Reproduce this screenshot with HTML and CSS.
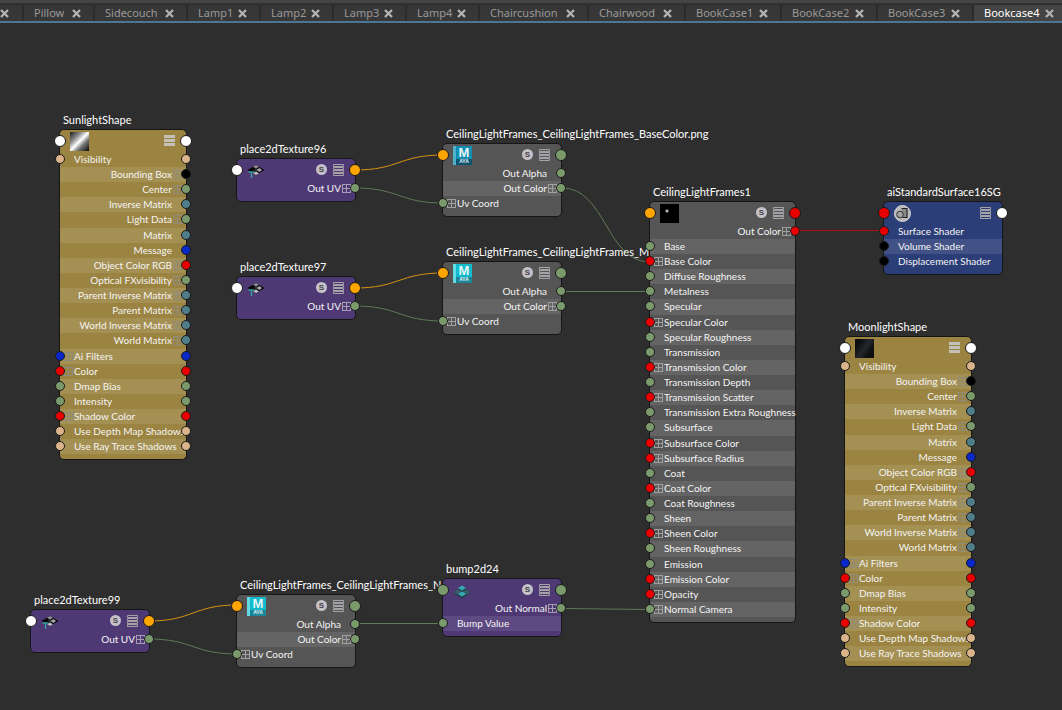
FILE: index.html
```html
<!DOCTYPE html>
<html lang="en">
<head>
<meta charset="utf-8">
<title>Node Editor</title>
<link rel="stylesheet" href="styles.css">
</head>
<body>
<svg class="defs" aria-hidden="true">
  <defs>
    <symbol id="close" viewBox="0 0 9 9"><path d="M1 1 8 8M8 1 1 8" stroke="currentColor" stroke-width="2.3" fill="none"/></symbol>
    <symbol id="bars" viewBox="0 0 11 12"><path d="M.5 .5h10v2H.5zM.5 3.5h10v2H.5zM.5 6.5h10v2H.5zM.5 9.5h10v2H.5z" fill="none" stroke="#a5a2a8"/></symbol>
    <symbol id="bars-solid" viewBox="0 0 11 12"><path d="M0 0h11v3H0zM0 4h11v3H0zM0 8h11v3H0z" fill="#c4c1b8"/></symbol>
    <symbol id="place" viewBox="0 0 17 14">
      <path d="M0 5 8.500 0 17 5 8.500 10z" fill="#060606"/>
      <path d="M5.500 1.800 8.500 0l3 1.800-3 2z" fill="#8d8a92"/>
      <path d="M8.500 3.300 11 5 8.500 6.700 6 5z" fill="#2d2d31"/>
      <path d="M9 5 12 3l2.500 2L12 7z" fill="#a6a3aa"/>
      <path d="M5.500 8.200 8.500 6.500l3 1.800L8.500 10z" fill="#c2c1c4"/>
      <path d="M1 7h6M4 7v6" stroke="#35a3a5" stroke-width="1.300" fill="none"/>
    </symbol>
    <symbol id="bump" viewBox="0 0 18 13">
      <path d="M0 7 9 1l9 6-9 6z" fill="#26404a"/>
      <path d="M9 0l4 2.500L9 5 5 2.500z" fill="#39a9b8"/>
      <path d="M4.500 4 8.500 6.500 4.500 9 .8 6.700z" fill="#35606b"/>
      <path d="M13.500 4 17.200 6.700 13.500 9 9.500 6.500z" fill="#35606b"/>
      <path d="M9 6l4 2.500L9 11 5 8.500z" fill="#39a9b8"/>
    </symbol>
    <symbol id="group" viewBox="0 0 17 17">
      <circle cx="8.500" cy="8.500" r="8" fill="#b9b9b9" stroke="#d2d2d2"/>
      <path d="M7.500 3.500h5.500v9H8.500" fill="#8a8a8a" stroke="#222" stroke-width="1.100"/>
      <circle cx="6" cy="9.500" r="3.300" fill="#a4a4a4" stroke="#333"/>
    </symbol>
  </defs>
</svg>

<nav class="tabs" aria-label="Graph tabs">
  <div class="tab tab-cut"><button class="close" aria-label="Close tab"><svg><use href="#close"/></svg></button></div>
  <div class="tab tab-pillow"><button class="label">Pillow</button><button class="close" aria-label="Close Pillow"><svg><use href="#close"/></svg></button></div>
  <div class="tab tab-couch"><button class="label">Sidecouch</button><button class="close" aria-label="Close Sidecouch"><svg><use href="#close"/></svg></button></div>
  <div class="tab tab-lamp"><button class="label">Lamp1</button><button class="close" aria-label="Close Lamp1"><svg><use href="#close"/></svg></button></div>
  <div class="tab tab-lamp"><button class="label">Lamp2</button><button class="close" aria-label="Close Lamp2"><svg><use href="#close"/></svg></button></div>
  <div class="tab tab-lamp"><button class="label">Lamp3</button><button class="close" aria-label="Close Lamp3"><svg><use href="#close"/></svg></button></div>
  <div class="tab tab-lamp"><button class="label">Lamp4</button><button class="close" aria-label="Close Lamp4"><svg><use href="#close"/></svg></button></div>
  <div class="tab tab-cushion"><button class="label">Chaircushion</button><button class="close" aria-label="Close Chaircushion"><svg><use href="#close"/></svg></button></div>
  <div class="tab tab-wood"><button class="label">Chairwood</button><button class="close" aria-label="Close Chairwood"><svg><use href="#close"/></svg></button></div>
  <div class="tab tab-book"><button class="label">BookCase1</button><button class="close" aria-label="Close BookCase1"><svg><use href="#close"/></svg></button></div>
  <div class="tab tab-book"><button class="label">BookCase2</button><button class="close" aria-label="Close BookCase2"><svg><use href="#close"/></svg></button></div>
  <div class="tab tab-book"><button class="label">BookCase3</button><button class="close" aria-label="Close BookCase3"><svg><use href="#close"/></svg></button></div>
  <div class="tab tab-book active"><button class="label">Bookcase4</button><button class="close" aria-label="Close Bookcase4"><svg><use href="#close"/></svg></button></div>
</nav>

<main class="canvas">
  <svg class="wires" aria-hidden="true">
    <g class="wire-orange">
      <path d="M355 147C399 147 399 132 443 132"/>
      <path d="M355 265C399 265 399 250 443 250"/>
      <path d="M149 598C193 598 193 582 237 582"/>
    </g>
    <g class="wire-green">
      <path d="M355 165C399 165 399 180 443 180"/>
      <path d="M355 283C399 283 399 298 443 298"/>
      <path d="M149 616C193 616 193 631 237 631"/>
      <path d="M562 165C606 165 606 239 650 239"/>
      <path d="M562 268.500H650"/>
      <path d="M355 600.500H443"/>
      <path d="M562 585.500 650 586.500"/>
    </g>
    <path class="wire-red" d="M796 207.500H884"/>
  </svg>

  <section class="node gold" id="sunlight">
    <h2>SunlightShape</h2>
    <div class="body">
      <header><i class="port l white"></i><span class="swatch metal"></span><button class="menu" aria-label="Display mode"><svg><use href="#bars-solid"/></svg></button><i class="port r white"></i></header>
      <ul>
        <li class="in"><i class="port l tan"></i>Visibility<i class="port r tan"></i></li>
        <li class="out plus">Bounding Box<i class="port r black"></i></li>
        <li class="out plus">Center<i class="port r green"></i></li>
        <li class="out">Inverse Matrix<i class="port r teal"></i></li>
        <li class="out plus tall">Light Data<i class="port r green"></i></li>
        <li class="out">Matrix<i class="port r teal"></i></li>
        <li class="out">Message<i class="port r blue"></i></li>
        <li class="out plus">Object Color RGB<i class="port r red"></i></li>
        <li class="out plus">Optical FXvisibility<i class="port r green"></i></li>
        <li class="out plus">Parent Inverse Matrix<i class="port r teal"></i></li>
        <li class="out plus">Parent Matrix<i class="port r teal"></i></li>
        <li class="out plus">World Inverse Matrix<i class="port r teal"></i></li>
        <li class="out plus tall">World Matrix<i class="port r teal"></i></li>
        <li class="in plus"><i class="port l blue"></i>Ai Filters<i class="port r blue"></i></li>
        <li class="in plus"><i class="port l red"></i>Color<i class="port r red"></i></li>
        <li class="in"><i class="port l green"></i>Dmap Bias<i class="port r green"></i></li>
        <li class="in"><i class="port l green"></i>Intensity<i class="port r green"></i></li>
        <li class="in plus"><i class="port l red"></i>Shadow Color<i class="port r red"></i></li>
        <li class="in"><i class="port l tan"></i>Use Depth Map Shadows<i class="port r tan"></i></li>
        <li class="in"><i class="port l tan"></i>Use Ray Trace Shadows<i class="port r tan"></i></li>
      </ul>
    </div>
  </section>

  <section class="node purple" id="place96">
    <h2>place2dTexture96</h2>
    <div class="body">
      <header><i class="port l white"></i><svg class="glyph"><use href="#place"/></svg><button class="solo" aria-label="Solo">S</button><button class="menu" aria-label="Display mode"><svg><use href="#bars"/></svg></button><i class="port r orange"></i></header>
      <ul><li class="out plus">Out UV<i class="port r green"></i></li></ul>
    </div>
  </section>

  <section class="node purple" id="place97">
    <h2>place2dTexture97</h2>
    <div class="body">
      <header><i class="port l white"></i><svg class="glyph"><use href="#place"/></svg><button class="solo" aria-label="Solo">S</button><button class="menu" aria-label="Display mode"><svg><use href="#bars"/></svg></button><i class="port r orange"></i></header>
      <ul><li class="out plus">Out UV<i class="port r green"></i></li></ul>
    </div>
  </section>

  <section class="node purple" id="place99">
    <h2>place2dTexture99</h2>
    <div class="body">
      <header><i class="port l white"></i><svg class="glyph"><use href="#place"/></svg><button class="solo" aria-label="Solo">S</button><button class="menu" aria-label="Display mode"><svg><use href="#bars"/></svg></button><i class="port r orange"></i></header>
      <ul><li class="out plus">Out UV<i class="port r green"></i></li></ul>
    </div>
  </section>

  <section class="node gray" id="file-base">
    <h2>CeilingLightFrames_CeilingLightFrames_BaseColor.png</h2>
    <div class="body">
      <header><i class="port l orange"></i><span class="swatch maya dim"><b>M</b><small>AYA</small></span><button class="solo" aria-label="Solo">S</button><button class="menu" aria-label="Display mode"><svg><use href="#bars"/></svg></button><i class="port r green"></i></header>
      <ul>
        <li class="out">Out Alpha<i class="port r green"></i></li>
        <li class="out plus">Out Color<i class="port r green"></i></li>
        <li class="in plus"><i class="port l green"></i>Uv Coord</li>
      </ul>
    </div>
  </section>

  <section class="node gray" id="file-metal">
    <h2>CeilingLightFrames_CeilingLightFrames_Met</h2>
    <div class="body">
      <header><i class="port l orange"></i><span class="swatch maya"><b>M</b><small>AYA</small></span><button class="solo" aria-label="Solo">S</button><button class="menu" aria-label="Display mode"><svg><use href="#bars"/></svg></button><i class="port r green"></i></header>
      <ul>
        <li class="out">Out Alpha<i class="port r green"></i></li>
        <li class="out plus">Out Color<i class="port r green"></i></li>
        <li class="in plus"><i class="port l green"></i>Uv Coord</li>
      </ul>
    </div>
  </section>

  <section class="node gray" id="file-normal">
    <h2>CeilingLightFrames_CeilingLightFrames_Nor</h2>
    <div class="body">
      <header><i class="port l orange"></i><span class="swatch maya"><b>M</b><small>AYA</small></span><button class="solo" aria-label="Solo">S</button><button class="menu" aria-label="Display mode"><svg><use href="#bars"/></svg></button><i class="port r green"></i></header>
      <ul>
        <li class="out">Out Alpha<i class="port r green"></i></li>
        <li class="out plus">Out Color<i class="port r green"></i></li>
        <li class="in plus"><i class="port l green"></i>Uv Coord</li>
      </ul>
    </div>
  </section>

  <section class="node purple" id="bump24">
    <h2>bump2d24</h2>
    <div class="body">
      <header><i class="port l green"></i><svg class="glyph"><use href="#bump"/></svg><button class="solo" aria-label="Solo">S</button><button class="menu" aria-label="Display mode"><svg><use href="#bars"/></svg></button><i class="port r green"></i></header>
      <ul>
        <li class="out plus">Out Normal<i class="port r green"></i></li>
        <li class="in"><i class="port l green"></i>Bump Value</li>
      </ul>
    </div>
  </section>

  <section class="node gray" id="surface">
    <h2>CeilingLightFrames1</h2>
    <div class="body">
      <header><i class="port l orange"></i><span class="swatch night"></span><button class="solo" aria-label="Solo">S</button><button class="menu" aria-label="Display mode"><svg><use href="#bars"/></svg></button><i class="port r red"></i></header>
      <ul>
        <li class="out plus">Out Color<i class="port r red"></i></li>
        <li class="in"><i class="port l green"></i>Base</li>
        <li class="in plus"><i class="port l red"></i>Base Color</li>
        <li class="in"><i class="port l green"></i>Diffuse Roughness</li>
        <li class="in"><i class="port l green"></i>Metalness</li>
        <li class="in tall"><i class="port l green"></i>Specular</li>
        <li class="in plus"><i class="port l red"></i>Specular Color</li>
        <li class="in"><i class="port l green"></i>Specular Roughness</li>
        <li class="in"><i class="port l green"></i>Transmission</li>
        <li class="in plus"><i class="port l red"></i>Transmission Color</li>
        <li class="in"><i class="port l green"></i>Transmission Depth</li>
        <li class="in plus"><i class="port l red"></i>Transmission Scatter</li>
        <li class="in"><i class="port l green"></i>Transmission Extra Roughness</li>
        <li class="in tall"><i class="port l green"></i>Subsurface</li>
        <li class="in plus"><i class="port l red"></i>Subsurface Color</li>
        <li class="in plus"><i class="port l red"></i>Subsurface Radius</li>
        <li class="in"><i class="port l green"></i>Coat</li>
        <li class="in plus"><i class="port l red"></i>Coat Color</li>
        <li class="in"><i class="port l green"></i>Coat Roughness</li>
        <li class="in"><i class="port l green"></i>Sheen</li>
        <li class="in plus"><i class="port l red"></i>Sheen Color</li>
        <li class="in tall"><i class="port l green"></i>Sheen Roughness</li>
        <li class="in"><i class="port l green"></i>Emission</li>
        <li class="in plus"><i class="port l red"></i>Emission Color</li>
        <li class="in plus"><i class="port l red"></i>Opacity</li>
        <li class="in plus"><i class="port l green"></i>Normal Camera</li>
      </ul>
    </div>
  </section>

  <section class="node navy" id="shading-group">
    <h2>aiStandardSurface16SG</h2>
    <div class="body">
      <header><i class="port l red"></i><svg class="glyph round"><use href="#group"/></svg><button class="menu" aria-label="Display mode"><svg><use href="#bars"/></svg></button><i class="port r white"></i></header>
      <ul>
        <li class="in"><i class="port l red"></i>Surface Shader</li>
        <li class="in"><i class="port l black"></i>Volume Shader</li>
        <li class="in"><i class="port l black"></i>Displacement Shader</li>
      </ul>
    </div>
  </section>

  <section class="node gold" id="moonlight">
    <h2>MoonlightShape</h2>
    <div class="body">
      <header><i class="port l white"></i><span class="swatch dusk"></span><button class="menu" aria-label="Display mode"><svg><use href="#bars-solid"/></svg></button><i class="port r white"></i></header>
      <ul>
        <li class="in"><i class="port l tan"></i>Visibility<i class="port r tan"></i></li>
        <li class="out plus">Bounding Box<i class="port r black"></i></li>
        <li class="out plus">Center<i class="port r green"></i></li>
        <li class="out">Inverse Matrix<i class="port r teal"></i></li>
        <li class="out plus tall">Light Data<i class="port r green"></i></li>
        <li class="out">Matrix<i class="port r teal"></i></li>
        <li class="out">Message<i class="port r blue"></i></li>
        <li class="out plus">Object Color RGB<i class="port r red"></i></li>
        <li class="out plus">Optical FXvisibility<i class="port r green"></i></li>
        <li class="out plus">Parent Inverse Matrix<i class="port r teal"></i></li>
        <li class="out plus">Parent Matrix<i class="port r teal"></i></li>
        <li class="out plus">World Inverse Matrix<i class="port r teal"></i></li>
        <li class="out plus tall">World Matrix<i class="port r teal"></i></li>
        <li class="in plus"><i class="port l blue"></i>Ai Filters<i class="port r blue"></i></li>
        <li class="in plus"><i class="port l red"></i>Color<i class="port r red"></i></li>
        <li class="in"><i class="port l green"></i>Dmap Bias<i class="port r green"></i></li>
        <li class="in"><i class="port l green"></i>Intensity<i class="port r green"></i></li>
        <li class="in plus"><i class="port l red"></i>Shadow Color<i class="port r red"></i></li>
        <li class="in"><i class="port l tan"></i>Use Depth Map Shadows<i class="port r tan"></i></li>
        <li class="in"><i class="port l tan"></i>Use Ray Trace Shadows<i class="port r tan"></i></li>
      </ul>
    </div>
  </section>
</main>
</body>
</html>
```

FILE: styles.css
```css
*, ::before, ::after { box-sizing: border-box; }

body {
  margin: 0;
  min-height: 100vh;
  display: flex;
  flex-direction: column;
  overflow: hidden;
  background: #2e2e2e;
  color: #f4f4f4;
  font-family: Lato, "Noto Sans", sans-serif;
}

button {
  margin: 0;
  padding: 0;
  border: 0;
  background: none;
  color: inherit;
  font: inherit;
}

.defs { position: absolute; width: 0; height: 0; }

/* Tab strip */
.tabs {
  display: flex;
  height: 23px;
  padding-top: 4px;
  border-bottom: 2px solid #4b7694;
  background: linear-gradient(#444 0 3px, #333 3px);
  font-family: "Noto Sans", sans-serif;
  font-size: 11px;
  line-height: 15px;
}
.tab {
  flex: none;
  display: flex;
  align-items: flex-start;
  justify-content: space-between;
  padding: 0 12px 0 10px;
  border: 1px solid #2c2c2c;
  border-bottom: 0;
  border-radius: 3px 3px 0 0;
  background: #373737;
  color: #999;
}
.tab.active { padding-right: 14px; background: #444; color: #fff; }
.tab-cut { width: 23px; border-left: 0; padding-left: 0; }
.tab-pillow { width: 71px; }
.tab-couch { width: 93px; }
.tab-lamp { width: 73px; }
.tab-cushion { width: 109px; }
.tab-wood { width: 97px; }
.tab-book { width: 96px; }
.close { display: flex; margin-top: 4px; color: #b2b2b2; }
.close svg { width: 9px; height: 9px; }

/* Graph canvas */
.canvas { position: relative; flex: 1; overflow: hidden; }
.wires { position: absolute; inset: 0; width: 100%; height: 100%; fill: none; }
.wire-orange { stroke: #d79310; }
.wire-green { stroke: #607a56; }
.wire-red { stroke: #b01010; }

.node { position: absolute; width: 120px; }
#sunlight { left: 59px; top: 88px; width: 128px; }
#place96 { left: 236px; top: 117px; }
#place97 { left: 236px; top: 235px; }
#place99 { left: 30px; top: 568px; }
#file-base { left: 442px; top: 102px; }
#file-metal { left: 442px; top: 220px; }
#file-normal { left: 236px; top: 553px; }
#bump24 { left: 442px; top: 537px; }
#surface { left: 649px; top: 160px; width: 147px; }
#shading-group { left: 883px; top: 160px; }
#moonlight { left: 844px; top: 295px; width: 128px; }

.node h2 {
  margin: 0;
  padding-left: 4px;
  height: 18px;
  font-size: 11px;
  font-weight: 400;
  line-height: 18px;
  white-space: nowrap;
  color: #fff;
}
.body {
  padding-bottom: 5px;
  border: 1px solid #161616;
  border-radius: 5px;
  background: var(--base);
}
.gold { --base: #9b8441; --stripe: #a49052; --plus: #8f8c7e; }
.gray { --base: #555; --stripe: #646464; --plus: #a0a0a0; }
.purple { --base: #4e3975; --stripe: #5e4a82; --plus: #a59eb3; }
.navy { --base: #2c3e77; --stripe: #425287; --plus: #a0a0a0; }

.node header {
  position: relative;
  display: flex;
  gap: 6px;
  height: 22px;
  padding: 0 11px 0 10px;
}
.swatch { width: 19px; height: 19px; margin-top: 2px; }
.metal { background: linear-gradient(135deg, #1c1c1c, #8d8d8d 30%, #fff 50%, #777 68%, #050505); }
.dusk { background: linear-gradient(125deg, #0c0d0f 20%, #24272b 50%, #0e0f11 75%); }
.night { background: radial-gradient(circle at 7px 7px, #b8b8ae 0 1px, #000 2px); }
.maya {
  display: flex;
  flex-direction: column;
  align-items: center;
  border-left: 3px solid #62dbe4;
  background: linear-gradient(#10bccb 0 13px, #1a8799 13px);
  color: #e8f6f8;
}
.maya.dim { border-color: #4fb2cc; background: linear-gradient(#128db2 0 13px, #0c5370 13px); }
.maya b { font: bold 13px/13px "Liberation Sans", sans-serif; }
.maya small { font: bold 5px/5px "Liberation Sans", sans-serif; }
.glyph { width: 18px; height: 14px; margin-top: 6px; }
.glyph.round { width: 17px; height: 17px; margin-top: 3px; }
.solo {
  width: 11px;
  height: 11px;
  margin: 5px 0 0 auto;
  border-radius: 50%;
  background: #c4c2c8;
  color: #444;
  font: bold 8px/11px "Liberation Sans", sans-serif;
}
.menu { display: flex; height: 12px; margin-top: 5px; }
.menu:not(.solo + .menu) { margin-left: auto; }
.menu svg { width: 11px; height: 12px; }

.node ul { margin: 0; padding: 0; list-style: none; }
.node li {
  position: relative;
  display: flex;
  gap: 1px;
  height: 15px;
  padding: 0 4px;
  font-size: 10px;
  line-height: 14px;
  white-space: nowrap;
}
.node li:nth-child(even) { background: var(--stripe); }
.node li.tall { height: 16px; }
.out { justify-content: flex-end; }

/* Expand box beside a compound attribute; an empty slot when there is none */
.in::before, .out::after {
  content: "";
  flex: none;
  width: 9px;
  height: 9px;
  margin-top: 3px;
}
.in.plus::before, .out.plus::after {
  border: 1px solid var(--plus);
  background:
    linear-gradient(var(--plus), var(--plus)) center / 1px 100% no-repeat,
    linear-gradient(var(--plus), var(--plus)) center / 100% 1px no-repeat;
}

/* Connection ports sit over the node's edges */
.port {
  position: absolute;
  top: 2px;
  width: 10px;
  height: 10px;
  border: 1px solid #1a1a1a;
  border-radius: 50%;
}
.port.l { left: -5px; }
.port.r { right: -5px; }
header .port { top: 5px; width: 12px; height: 12px; }
header .port.l { left: -6px; }
header .port.r { right: -6px; }
.white { background: #fff; }
.tan { background: #dcb48c; }
.black { background: #000; }
.green { background: #7a9a6c; }
.teal { background: #4f7d8a; }
.blue { background: #0a28c8; }
.red { background: #e80000; }
.orange { background: #ffa500; }
```
